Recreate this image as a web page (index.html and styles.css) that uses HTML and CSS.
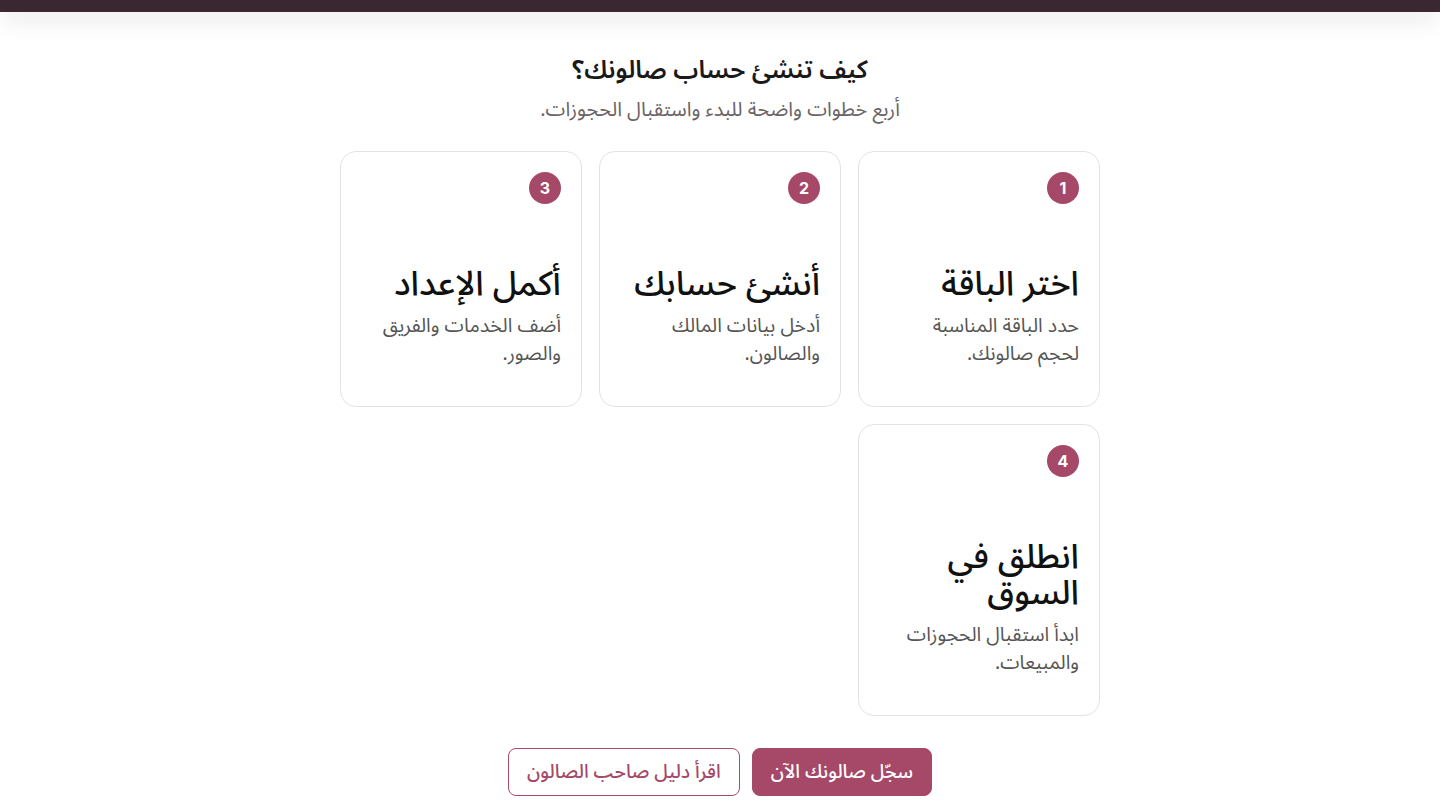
FILE: index.html
```html
<!DOCTYPE html>
<html lang="ar" dir="rtl">
<head>
<meta charset="utf-8">
<title>كيف تنشئ حساب صالونك؟</title>
<link rel="stylesheet" href="styles.css">
</head>
<body>
<header class="topbar"></header>
<main class="section">
  <h2 class="title">كيف تنشئ حساب صالونك؟</h2>
  <p class="subtitle">أربع خطوات واضحة للبدء واستقبال الحجوزات.</p>
  <div class="steps">
    <div class="card">
      <span class="badge">1</span>
      <h3 class="card-title">اختر الباقة</h3>
      <p class="card-text">حدد الباقة المناسبة لحجم صالونك.</p>
    </div>
    <div class="card">
      <span class="badge">2</span>
      <h3 class="card-title">أنشئ حسابك</h3>
      <p class="card-text">أدخل بيانات المالك والصالون.</p>
    </div>
    <div class="card">
      <span class="badge">3</span>
      <h3 class="card-title">أكمل الإعداد</h3>
      <p class="card-text">أضف الخدمات والفريق والصور.</p>
    </div>
    <div class="card">
      <span class="badge">4</span>
      <h3 class="card-title">انطلق في السوق</h3>
      <p class="card-text">ابدأ استقبال الحجوزات والمبيعات.</p>
    </div>
  </div>
  <div class="actions">
    <a class="btn btn-primary" href="#">سجّل صالونك الآن</a>
    <a class="btn btn-outline" href="#">اقرأ دليل صاحب الصالون</a>
  </div>
</main>
</body>
</html>
```

FILE: styles.css
```css
* { box-sizing: border-box; }
html, body { margin: 0; padding: 0; background: #ffffff; }
body {
  font-family: "Noto Sans Arabic", "DejaVu Sans", sans-serif;
  color: #111111;
}
.topbar {
  height: 12px;
  background: #3b2731;
  box-shadow: 0 6px 24px rgba(0, 0, 0, 0.12);
}
.section {
  width: 760px;
  margin: 0 auto;
  padding-top: 38px;
  display: flex;
  flex-direction: column;
  align-items: center;
}
.title {
  margin: 0;
  font-size: 25px;
  line-height: 40px;
  font-weight: 600;
  color: #1a1a1a;
}
.subtitle {
  margin: 6px 0 0;
  font-size: 20px;
  line-height: 28px;
  color: #6b6366;
}
.steps {
  margin-top: 27px;
  width: 100%;
  display: grid;
  grid-template-columns: repeat(3, 1fr);
  gap: 17px;
}
.card {
  border: 1px solid #e3e3e3;
  border-radius: 16px;
  padding: 20px 20px 38px;
  display: flex;
  flex-direction: column;
  align-items: flex-start;
}
.badge {
  width: 32px;
  height: 32px;
  border-radius: 50%;
  background: #a64867;
  color: #ffffff;
  font-family: "Inter", "DejaVu Sans", sans-serif;
  font-size: 16px;
  font-weight: 700;
  display: flex;
  align-items: center;
  justify-content: center;
}
.card-title {
  margin: 62px 0 0;
  font-size: 34px;
  line-height: 36px;
  font-weight: 500;
  color: #111111;
}
.card-text {
  margin: 10px 0 0;
  max-width: 185px;
  font-size: 19.5px;
  line-height: 28px;
  color: #555555;
}
.actions {
  margin-top: 32px;
  display: flex;
  gap: 12px;
  justify-content: center;
}
.btn {
  height: 48px;
  padding: 0 18px;
  border-radius: 8px;
  font-size: 19px;
  font-weight: 500;
  display: flex;
  align-items: center;
  text-decoration: none;
}
.btn-primary {
  background: #a64867;
  color: #ffffff;
  border: 1px solid #a64867;
}
.btn-outline {
  background: #ffffff;
  color: #a64867;
  border: 1px solid #a64867;
}
```
